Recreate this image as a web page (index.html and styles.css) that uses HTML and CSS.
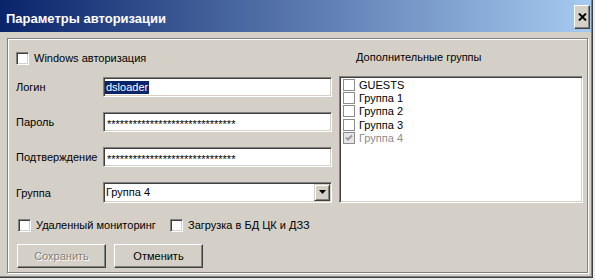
FILE: index.html
```html
<!DOCTYPE html>
<html lang="ru">
<head>
	<meta charset="UTF-8">
	<title>Параметры авторизации</title>
	<link rel="stylesheet" href="styles.css">
</head>
<body>
<div class="window">
	<div class="titlebar">
		<span class="title">Параметры авторизации</span>
		<span class="close">
			<svg width="9" height="8" viewBox="0 0 9 8"><path d="M1 0.5L8 7.5M8 0.5L1 7.5" stroke="#000" stroke-width="1.9"/></svg>
		</span>
	</div>
	<div class="panel">
		<div class="left">
			<label class="check"><span class="box"></span>Windows авторизация</label>
			<div class="form">
				<span class="lbl">Логин</span>
				<div class="field"><span class="sel">dsloader</span></div>
				<span class="lbl">Пароль</span>
				<div class="field"><span class="stars">******************************</span></div>
				<span class="lbl">Подтверждение</span>
				<div class="field"><span class="stars">******************************</span></div>
				<span class="lbl">Группа</span>
				<div class="field combo">
					<span class="value">Группа 4</span>
					<span class="drop"><svg width="7" height="4" viewBox="0 0 7 4"><path d="M0 0H7L3.5 4Z" fill="#000"/></svg></span>
				</div>
			</div>
			<div class="opts">
				<label class="check wide"><span class="box"></span>Удаленный мониторинг</label>
				<label class="check"><span class="box"></span>Загрузка в БД ЦК и ДЗЗ</label>
			</div>
			<div class="buttons">
				<span class="btn disabled">Сохранить</span>
				<span class="btn">Отменить</span>
			</div>
		</div>
		<div class="right">
			<div class="list-title">Дополнительные группы</div>
			<div class="list">
				<div class="item"><span class="lbox"></span>GUESTS</div>
				<div class="item"><span class="lbox"></span>Группа 1</div>
				<div class="item"><span class="lbox"></span>Группа 2</div>
				<div class="item"><span class="lbox"></span>Группа 3</div>
				<div class="item off"><span class="lbox on"><svg width="8" height="8" viewBox="0 0 8 8"><path d="M1 3.5L3 5.5L7 1.5" stroke="#9a9a9a" stroke-width="2" fill="none"/></svg></span>Группа 4</div>
			</div>
		</div>
	</div>
</div>
</body>
</html>
```

FILE: styles.css
```css
*{
	margin: 0;
	padding: 0;
	box-sizing: border-box;
}
body{
	background: #ececec;
	font-family: "Liberation Sans", Arial, sans-serif;
	font-size: 11px;
	color: #000;
}
.window{
	width: 593px;
	height: 278px;
	background: #d4d0c8;
	border-right: 1px solid #404040;
	border-bottom: 1px solid #404040;
	box-shadow: inset -1px -1px #808080;
}
.titlebar{
	display: flex;
	align-items: flex-start;
	height: 32px;
	margin-right: 1px;
	padding-left: 6px;
	background: linear-gradient(to right, #0a246a, #a6caf0);
}
.title{
	padding-top: 3px;
	line-height: 32px;
	font-size: 13px;
	font-weight: bold;
	color: #fff;
}
.close{
	display: flex;
	align-items: center;
	justify-content: center;
	width: 16px;
	height: 24px;
	margin: 5px 1px 0 auto;
	background: #d4d0c8;
	border: 1px solid;
	border-color: #fff #404040 #404040 #fff;
	box-shadow: inset -1px -1px #808080;
}
.panel{
	display: flex;
	width: 581px;
	height: 235px;
	margin: 6px 0 0 7px;
	border: 1px solid #808080;
	box-shadow: inset 1px 1px #fff, 1px 1px #fff;
}
.left{
	width: 331px;
	padding: 13px 0 0 8px;
}
.check{
	display: flex;
	align-items: center;
	height: 13px;
	line-height: 13px;
	white-space: nowrap;
}
.box{
	width: 13px;
	height: 13px;
	margin-right: 5px;
	background: #fff;
	border: 1px solid;
	border-color: #808080 #fff #fff #808080;
	box-shadow: inset 1px 1px #404040, inset -1px -1px #d4d0c8;
}
.form{
	display: grid;
	grid-template-columns: 87px 229px;
	grid-template-rows: 20px 20px 20px 21px;
	row-gap: 15px;
	align-items: center;
	margin-top: 12px;
}
.field{
	display: flex;
	align-items: center;
	height: 20px;
	padding-left: 1px;
	background: #fff;
	border: 1px solid;
	border-color: #808080 #fff #fff #808080;
	box-shadow: inset 1px 1px #404040, inset -1px -1px #d4d0c8;
	white-space: nowrap;
	overflow: hidden;
}
.sel{
	padding: 0 1px;
	line-height: 13px;
	background: #0a246a;
	color: #fff;
}
.stars{
	padding: 4px 0 0 2px;
	line-height: 13px;
}
.combo{
	height: 21px;
	margin-top: -1px;
	padding-left: 2px;
}
.value{
	flex: 1;
	line-height: 13px;
}
.drop{
	display: flex;
	align-items: center;
	justify-content: center;
	width: 16px;
	height: 17px;
	margin-right: 1px;
	background: #d4d0c8;
	border: 1px solid;
	border-color: #d4d0c8 #404040 #404040 #d4d0c8;
	box-shadow: inset 1px 1px #fff, inset -1px -1px #808080;
}
.opts{
	display: flex;
	margin: 16px 0 0 2px;
}
.wide{
	width: 152px;
}
.buttons{
	display: flex;
	gap: 8px;
	margin: 12px 0 0 1px;
}
.btn{
	display: flex;
	align-items: center;
	justify-content: center;
	width: 89px;
	height: 24px;
	background: #d4d0c8;
	border: 1px solid;
	border-color: #fff #404040 #404040 #fff;
	box-shadow: inset -1px -1px #808080;
}
.disabled{
	color: #808080;
	text-shadow: 1px 1px #fff;
}
.right{
	display: flex;
	flex-direction: column;
	padding-top: 12px;
}
.list-title{
	height: 13px;
	line-height: 13px;
	padding-left: 17px;
}
.list{
	width: 244px;
	height: 127px;
	margin-top: 12px;
	padding: 1px 0 0 3px;
	background: #fff;
	border: 1px solid;
	border-color: #808080 #fff #fff #808080;
	box-shadow: inset 1px 1px #404040, inset -1px -1px #d4d0c8;
}
.item{
	display: flex;
	align-items: center;
	height: 13.4px;
	white-space: nowrap;
}
.lbox{
	display: flex;
	align-items: center;
	justify-content: center;
	width: 12px;
	height: 12px;
	margin-right: 4px;
	background: #fff;
	border: 1px solid #8c8c8c;
}
.on{
	background: #e6e6e6;
}
.off{
	color: #8c8c8c;
}
```
